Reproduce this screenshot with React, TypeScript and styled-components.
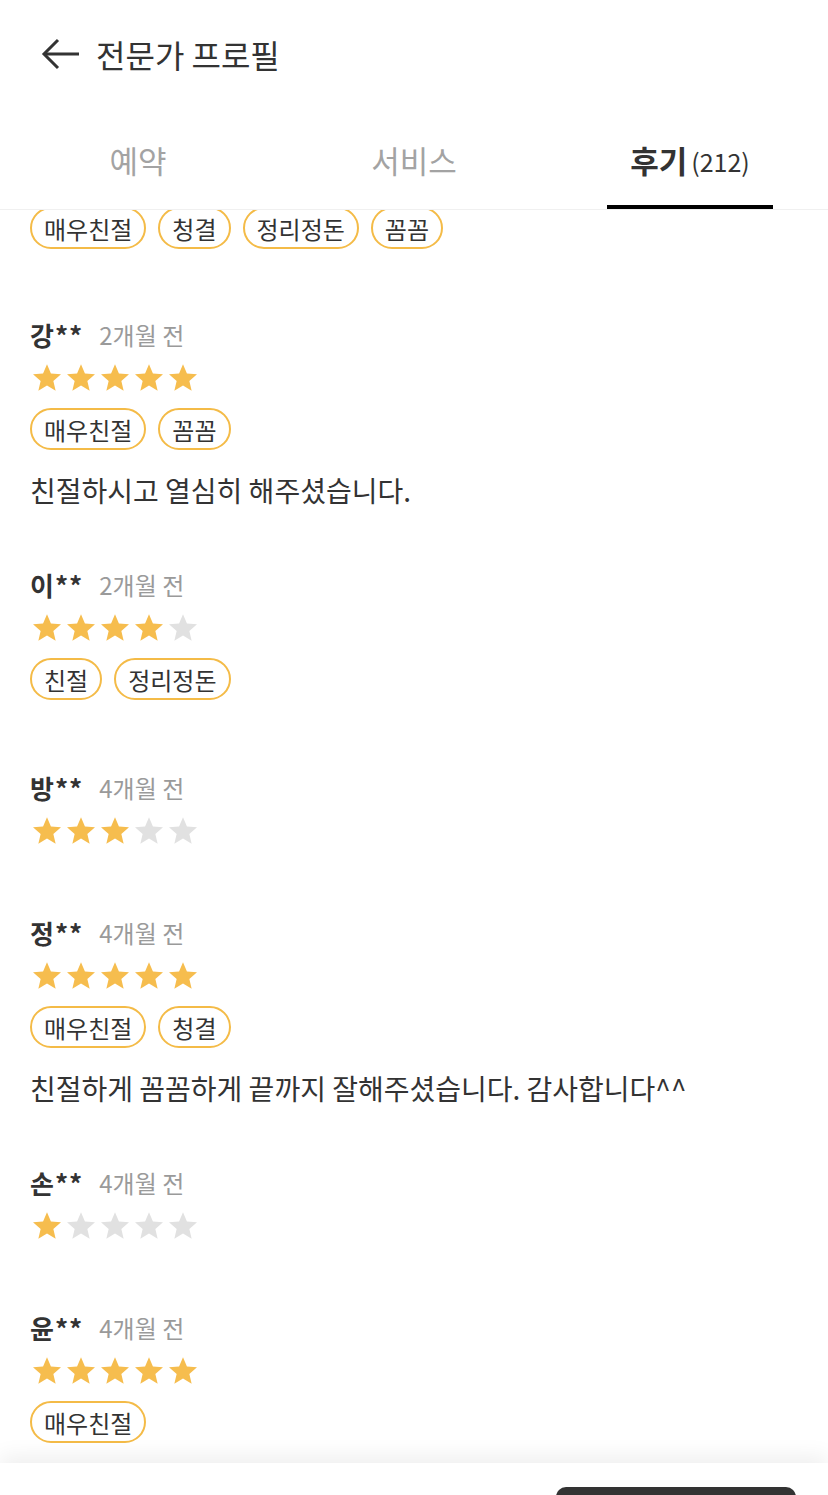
import React from 'react'
import styled, { createGlobalStyle } from 'styled-components'

interface Review {
    id: number,
    name: string,
    date: string,
    rating: number,
    tags: string[],
    text?: string
}

const reviews: Review[] = [
    { id: 1, name: '강**', date: '2개월 전', rating: 5, tags: ['매우친절', '꼼꼼'], text: '친절하시고 열심히 해주셨습니다.' },
    { id: 2, name: '이**', date: '2개월 전', rating: 4, tags: ['친절', '정리정돈'] },
    { id: 3, name: '방**', date: '4개월 전', rating: 3, tags: [] },
    { id: 4, name: '정**', date: '4개월 전', rating: 5, tags: ['매우친절', '청결'], text: '친절하게 꼼꼼하게 끝까지 잘해주셨습니다. 감사합니다^^' },
    { id: 5, name: '손**', date: '4개월 전', rating: 1, tags: [] },
    { id: 6, name: '윤**', date: '4개월 전', rating: 5, tags: ['매우친절'] },
]

const tabs = [
    { label: '예약' },
    { label: '서비스' },
    { label: '후기', count: 212 },
]

const GlobalStyle = createGlobalStyle`
    html, body {
        margin: 0;
        padding: 0;
        background: #fff;
    }
    body {
        font-family: "Noto Sans CJK KR", "Noto Sans", sans-serif;
        color: #333;
    }
    * {
        box-sizing: border-box;
    }
`

const Page = styled.div`
    width: 828px;
    height: 1495px;
    display: flex;
    flex-direction: column;
    overflow: hidden;
    background: #fff;
`

const Header = styled.header`
    height: 108px;
    display: flex;
    align-items: center;
    padding-left: 41px;
    gap: 17px;
    flex-shrink: 0;
`

const BackButton = styled.button`
    border: none;
    background: none;
    padding: 0;
    display: flex;
    cursor: pointer;
`

const Title = styled.h1`
    margin: 0;
    font-size: 32px;
    font-weight: 400;
    line-height: 40px;
    color: #333;
`

const TabBar = styled.nav`
    height: 102px;
    display: grid;
    grid-template-columns: repeat(3, 1fr);
    border-bottom: 1px solid #f0f0f0;
    flex-shrink: 0;
`

const Tab = styled.div<{ $active: boolean }>`
    position: relative;
    display: flex;
    align-items: center;
    justify-content: center;
    padding-top: 2px;
    font-size: 31px;
    font-weight: ${props => props.$active ? 700 : 400};
    color: ${props => props.$active ? '#333' : '#a3a3a3'};

    &::after {
        content: '';
        display: ${props => props.$active ? 'block' : 'none'};
        position: absolute;
        left: 20%;
        right: 20%;
        bottom: 0;
        height: 4px;
        background: #000;
    }
`

const TabCount = styled.span`
    font-size: 25px;
    font-weight: 400;
    margin-left: 4px;
    margin-top: 2px;
`

const Content = styled.main`
    flex: 1;
    overflow: hidden;
`

const ClippedTail = styled.div`
    margin-top: -3px;
    padding: 0 30px 34px;
`

const ReviewItem = styled.article`
    padding: 36px 30px;
`

const NameRow = styled.div`
    display: flex;
    align-items: center;
    height: 30px;
`

const Name = styled.span`
    font-size: 26px;
    font-weight: 700;
    color: #333;
    letter-spacing: 1px;
`

const DateText = styled.span`
    font-size: 24px;
    color: #9a9a9a;
    margin-left: 16px;
`

const StarRow = styled.div`
    display: flex;
    margin-top: 15px;
    height: 28px;
`

const StarIcon = styled.svg<{ $on: boolean }>`
    width: 28px;
    height: 27px;
    margin: 0 3px;
    fill: ${props => props.$on ? '#f6bd4e' : '#e1e1e1'};
`

const TagRow = styled.div<{ $first?: boolean }>`
    display: flex;
    gap: 12px;
    margin-top: ${props => props.$first ? 0 : 16}px;
`

const Tag = styled.span`
    display: inline-flex;
    align-items: center;
    height: 42px;
    padding: 0 12px;
    border: 2px solid #f4bb47;
    border-radius: 21px;
    font-size: 24px;
    color: #333;
`

const ReviewText = styled.p`
    margin: 22px 0 -11px;
    font-size: 28px;
    line-height: 36px;
    color: #333;
`

const BottomBar = styled.footer`
    position: relative;
    z-index: 1;
    height: 32px;
    flex-shrink: 0;
    display: flex;
    justify-content: flex-end;
    padding-right: 32px;
    background: #fff;
    box-shadow: 0 -6px 22px rgba(0, 0, 0, 0.07);
    overflow: hidden;
`

const ActionButton = styled.button`
    width: 240px;
    height: 60px;
    margin-top: 24px;
    border: none;
    border-radius: 10px;
    background: #333;
`

const Stars: React.FC<{ rating: number }> = ({ rating }) => (
    <StarRow>
        {[1, 2, 3, 4, 5].map(n => (
            <StarIcon key={n} $on={n <= rating} viewBox="2 2 20 19">
                <path d="M12 17.27L18.18 21l-1.64-7.03L22 9.24l-7.19-.61L12 2 9.19 8.63 2 9.24l5.46 4.73L5.82 21z" />
            </StarIcon>
        ))}
    </StarRow>
)

const Tags: React.FC<{ tags: string[], first?: boolean }> = ({ tags, first }) => (
    <TagRow $first={first}>
        {tags.map(t => <Tag key={t}>{t}</Tag>)}
    </TagRow>
)

const App: React.FC = () => {
    return (
        <Page>
            <GlobalStyle />
            <Header>
                <BackButton aria-label="뒤로">
                    <svg width="38" height="32" viewBox="0 0 38 32" fill="none" stroke="#333" strokeWidth="3">
                        <path d="M3 16H38" />
                        <path d="M17 2L3 16L17 30" strokeLinejoin="miter" />
                    </svg>
                </BackButton>
                <Title>전문가 프로필</Title>
            </Header>
            <TabBar>
                {tabs.map((tab, i) => (
                    <Tab key={tab.label} $active={i === 2}>
                        {tab.label}
                        {tab.count !== undefined && <TabCount>({tab.count})</TabCount>}
                    </Tab>
                ))}
            </TabBar>
            <Content>
                {/* tail of the previous review, scrolled under the tab bar */}
                <ClippedTail>
                    <Tags first tags={['매우친절', '청결', '정리정돈', '꼼꼼']} />
                </ClippedTail>
                {reviews.map(r => (
                    <ReviewItem key={r.id}>
                        <NameRow>
                            <Name>{r.name}</Name>
                            <DateText>{r.date}</DateText>
                        </NameRow>
                        <Stars rating={r.rating} />
                        {r.tags.length > 0 && <Tags tags={r.tags} />}
                        {r.text && <ReviewText>{r.text}</ReviewText>}
                    </ReviewItem>
                ))}
            </Content>
            <BottomBar>
                <ActionButton />
            </BottomBar>
        </Page>
    )
}

export default App
